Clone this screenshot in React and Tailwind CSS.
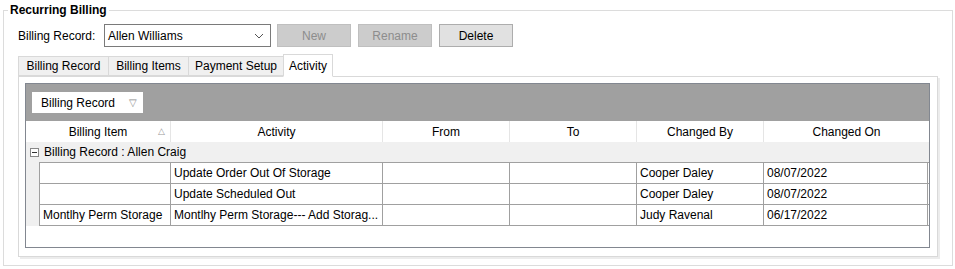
import React from 'react';

const cols = [
  { label: 'Billing Item', w: 'w-[145px]', sort: true },
  { label: 'Activity', w: 'w-[212px]' },
  { label: 'From', w: 'w-[127px]' },
  { label: 'To', w: 'w-[127px]' },
  { label: 'Changed By', w: 'w-[127px]' },
  { label: 'Changed On', w: 'flex-1' },
];

const rows = [
  ['', 'Update Order Out Of Storage', '', '', 'Cooper Daley', '08/07/2022'],
  ['', 'Update Scheduled Out', '', '', 'Cooper Daley', '08/07/2022'],
  ['Montlhy Perm Storage', 'Montlhy Perm Storage--- Add Storag...', '', '', 'Judy Ravenal', '06/17/2022'],
];

const tabs = ['Billing Record', 'Billing Items', 'Payment Setup', 'Activity'];
const tabW = ['w-[90px]', 'w-[80px]', 'w-[95px]', 'w-[50px]'];

function Tabs() {
  return (
    <div className="flex items-end h-[23px]">
      {tabs.map((t, i) => {
        const active = i === 3;
        return (
          <div
            key={t}
            className={
              active
                ? `${tabW[i]} h-[23px] -mb-px bg-white border border-[#d9d9d9] border-b-white flex items-start justify-center pt-[2px] z-10`
                : `${tabW[i]} h-[20px] bg-[#f0f0f0] border border-[#d9d9d9] border-r-0 flex items-center justify-center`
            }
          >
            {t}
          </div>
        );
      })}
    </div>
  );
}

function Grid() {
  return (
    <div className="border border-[#828790] h-[165px] flex flex-col bg-white">
      <div className="h-[37px] bg-[#a0a0a0] pl-[6px] pt-[8px]">
        <div className="w-[111px] h-[21px] bg-white flex items-center pl-[9px] pr-[6px] justify-between">
          <span>Billing Record</span>
          <span className="text-[10px] text-[#888]">▽</span>
        </div>
      </div>
      <div className="flex h-[21px]">
        {cols.map((c, i) => (
          <div
            key={c.label}
            className={`${c.w} relative flex items-center justify-center ${i < cols.length - 1 ? 'border-r border-[#e5e5e5]' : ''}`}
          >
            {c.label}
            {c.sort && <span className="absolute right-[5px] text-[9px] text-[#999]">△</span>}
          </div>
        ))}
      </div>
      <div className="h-[20px] bg-[#f0f0f0] flex items-center pl-[4px] gap-[5px]">
        <span className="w-[9px] h-[9px] border border-[#888] flex items-center justify-center bg-white">
          <span className="w-[5px] h-px bg-[#333]" />
        </span>
        <span>Billing Record : Allen Craig</span>
      </div>
      <div className="flex">
        <div className="w-[14px] bg-[#f0f0f0] border-r border-[#a0a0a0]" />
        <div className="flex-1 flex flex-col border-t border-[#a0a0a0]">
          {rows.map((r, ri) => (
            <div key={ri} className="flex h-[21px] border-b border-[#a0a0a0] pr-px">
              {r.map((v, ci) => (
                <div
                  key={ci}
                  className={`${ci === 0 ? 'w-[131px]' : cols[ci].w} flex items-center pl-[3px] whitespace-nowrap overflow-hidden border-r border-[#a0a0a0]`}
                >
                  {v}
                </div>
              ))}
            </div>
          ))}
        </div>
      </div>
    </div>
  );
}

export default function App() {
  return (
    <div className="w-[955px] h-[269px] bg-white text-[12px] text-black font-['Liberation_Sans',Arial,sans-serif] pt-[3px] pl-[3px]">
      <fieldset className="w-[949px] h-[263px] border border-[#dcdcdc] px-[14px]">
        <legend className="font-bold -ml-[10px] px-[2px] leading-[15px]">Recurring Billing</legend>
        <div className="flex items-center h-[23px] mt-[6px]">
          <span className="w-[86px]">Billing Record:</span>
          <div className="w-[167px] h-[23px] border border-[#7a7a7a] flex items-center justify-between pl-[3px] pr-[6px]">
            <span>Allen Williams</span>
            <svg width="10" height="6" viewBox="0 0 10 6" fill="none" stroke="#555" strokeWidth="1">
              <path d="M1 1l4 4 4-4" />
            </svg>
          </div>
          <div className="flex gap-[7px] ml-[6px]">
            <div className="w-[74px] h-[23px] bg-[#cccccc] border border-[#bfbfbf] text-[#8d8d8d] flex items-center justify-center">New</div>
            <div className="w-[74px] h-[23px] bg-[#cccccc] border border-[#bfbfbf] text-[#8d8d8d] flex items-center justify-center">Rename</div>
            <div className="w-[74px] h-[23px] bg-[#e1e1e1] border border-[#adadad] flex items-center justify-center">Delete</div>
          </div>
        </div>
        <div className="mt-[6px]">
          <Tabs />
          <div className="w-[920px] h-[181px] border border-[#d9d9d9] bg-white pt-[6px] pl-[6px] pr-[7px] shadow-[2px_2px_0_#ececec]">
            <Grid />
          </div>
        </div>
      </fieldset>
    </div>
  );
}
